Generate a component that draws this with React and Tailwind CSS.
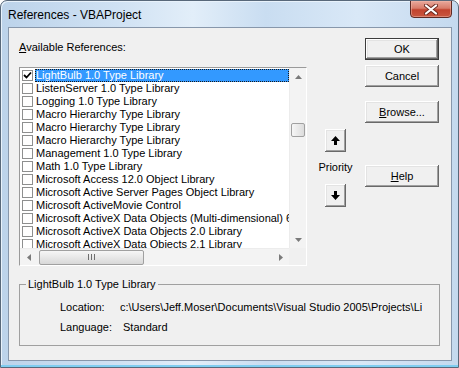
import React from "react";

const FONT = { fontFamily: '"Liberation Sans", Arial, sans-serif' };

const rows = [
  "LightBulb 1.0 Type Library",
  "ListenServer 1.0 Type Library",
  "Logging 1.0 Type Library",
  "Macro Hierarchy Type Library",
  "Macro Hierarchy Type Library",
  "Macro Hierarchy Type Library",
  "Management 1.0 Type Library",
  "Math 1.0 Type Library",
  "Microsoft Access 12.0 Object Library",
  "Microsoft Active Server Pages Object Library",
  "Microsoft ActiveMovie Control",
  "Microsoft ActiveX Data Objects (Multi-dimensional) 6.0 Library",
  "Microsoft ActiveX Data Objects 2.0 Library",
  "Microsoft ActiveX Data Objects 2.1 Library",
];

function Row({ text, index }) {
  const selected = index === 0;
  return (
    <div className="flex h-[13px] shrink-0 items-center">
      <div className="ml-[2px] flex h-[11px] w-[11px] shrink-0 items-center justify-center border border-[#8e8f8f] bg-white">
        {selected && (
          <svg width="9" height="9" viewBox="0 0 9 9">
            <path d="M1 4 L3.5 6.5 L8 1.5" fill="none" stroke="#000" strokeWidth="1.8" />
          </svg>
        )}
      </div>
      <div
        className={
          "ml-[2px] h-[13px] flex-1 overflow-hidden whitespace-nowrap pl-[1px] text-[11px] leading-[13px] " +
          (selected
            ? "bg-[#3399ff] text-white outline-1 outline-dotted outline-[#1a1a1a] -outline-offset-1"
            : "text-black")
        }
      >
        {text}
      </div>
    </div>
  );
}

function Tri({ dir }) {
  const pts = {
    up: "0,4 3.5,0 7,4",
    down: "0,0 3.5,4 7,0",
    left: "4,0 0,3.5 4,7",
    right: "0,0 4,3.5 0,7",
  }[dir];
  const w = dir === "up" || dir === "down" ? 7 : 4;
  const h = dir === "up" || dir === "down" ? 4 : 7;
  return (
    <svg width={w} height={h} viewBox={`0 0 ${w} ${h}`}>
      <polygon points={pts} fill="#7a7a7a" />
    </svg>
  );
}

const btn3d =
  "shadow-[inset_-1px_-1px_0_#696969,inset_1px_1px_0_#ffffff,inset_-2px_-2px_0_#a0a0a0,inset_2px_2px_0_#e3e3e3]";

function Button({ children, isDefault, className = "" }) {
  return (
    <div
      className={
        "flex h-[22px] w-[74px] items-center justify-center bg-[#f0f0f0] text-[11px] leading-[13px] text-black " +
        btn3d +
        (isDefault ? " border border-[#3c3c3c]" : "") +
        " " +
        className
      }
    >
      {children}
    </div>
  );
}

function ArrowBtn({ down }) {
  return (
    <div className={"flex h-[23px] w-[21px] shrink-0 items-center justify-center bg-[#f0f0f0] " + btn3d}>
      <svg width="9" height="9" viewBox="0 0 9 9" style={down ? { transform: "rotate(180deg)" } : undefined}>
        <polygon points="4.5,0 9,5 6,5 6,9 3,9 3,5 0,5" fill="#000" />
      </svg>
    </div>
  );
}

export default function App() {
  return (
    <div
      className="relative h-[368px] w-[459px] overflow-hidden rounded-t-[7px] border border-[#58687a] bg-[linear-gradient(90deg,#bcd3ea_0%,#cfe1f3_25%,#e2eef9_42%,#c9ddf1_58%,#d9e8f7_78%,#c4d9ee_100%)] shadow-[inset_0_-2px_0_#7fcdf0,inset_1px_1px_0_#e8f2fb]"
      style={FONT}
    >
      {/* title bar */}
      <div className="flex h-[26px] items-center pl-[7px] pt-[1px] text-[12px] text-black">
        References - VBAProject
      </div>

      {/* close button */}
      <div className="absolute right-[6px] top-[-1px] flex h-[18px] w-[42px] items-center justify-center rounded-b-[4px] border border-[#5e2a24] bg-[linear-gradient(180deg,#e9a99c_0%,#d87c6a_45%,#c2432e_55%,#c9573f_100%)] shadow-[inset_0_0_0_1px_#f0b8aa80]">
        <svg width="14" height="11" viewBox="0 0 14 11">
          <path d="M2 1.5 L12 9.5 M12 1.5 L2 9.5" stroke="#6b2a20" strokeWidth="4" strokeLinecap="round" />
          <path d="M2 1.5 L12 9.5 M12 1.5 L2 9.5" stroke="#ffffff" strokeWidth="2.2" strokeLinecap="round" />
        </svg>
      </div>

      {/* client area */}
      <div className="ml-[7px] h-[334px] w-[444px] border border-[#8797ab] bg-[#f0f0f0]">
        <div className="flex">
          {/* left column */}
          <div className="ml-[10px] flex flex-col">
            <div className="mt-[13px] h-[13px] text-[11px] leading-[13px] text-black">
              <span className="underline">A</span>vailable References:
            </div>
            <div className="mt-[13px] flex h-[199px] w-[288px] flex-col border border-b-white border-l-[#9a9a9a] border-r-white border-t-[#9a9a9a] bg-white">
              <div className="flex h-[180px]">
                <div className="flex flex-1 flex-col overflow-hidden pt-[1px]">
                  {rows.map((r, i) => (
                    <Row key={i} text={r} index={i} />
                  ))}
                </div>
                {/* vertical scrollbar */}
                <div className="flex w-[17px] flex-col border-l border-[#ececec] bg-[#f3f3f3]">
                  <div className="flex h-[17px] items-center justify-center">
                    <Tri dir="up" />
                  </div>
                  <div className="relative flex-1">
                    <div className="absolute left-[1px] top-[38px] h-[14px] w-[14px] rounded-[2px] border border-[#a0a0a0] bg-[linear-gradient(90deg,#f6f6f6,#dcdcdc)]" />
                  </div>
                  <div className="flex h-[17px] items-center justify-center">
                    <Tri dir="down" />
                  </div>
                </div>
              </div>
              <div className="flex h-[17px]">
                {/* horizontal scrollbar */}
                <div className="flex flex-1 items-center border-t border-[#ececec] bg-[#f3f3f3]">
                  <div className="flex h-[17px] w-[17px] items-center justify-center">
                    <Tri dir="left" />
                  </div>
                  <div className="ml-[2px] flex h-[15px] w-[105px] items-center justify-center gap-[2px] rounded-[2px] border border-[#a0a0a0] bg-[linear-gradient(180deg,#f6f6f6,#d8d8d8)]">
                    <div className="h-[6px] w-[1px] bg-[#6e6e6e]" />
                    <div className="h-[6px] w-[1px] bg-[#6e6e6e]" />
                    <div className="h-[6px] w-[1px] bg-[#6e6e6e]" />
                  </div>
                  <div className="flex-1" />
                  <div className="flex h-[17px] w-[17px] items-center justify-center">
                    <Tri dir="right" />
                  </div>
                </div>
                <div className="h-[17px] w-[17px] bg-[#f0f0f0]" />
              </div>
            </div>
          </div>

          {/* priority column */}
          <div className="ml-[18px] mt-[101px] flex w-[21px] shrink-0 flex-col items-center">
            <ArrowBtn />
            <div className="mt-[9px] h-[13px] whitespace-nowrap text-[11px] leading-[13px] text-black">Priority</div>
            <div className="mt-[10px]">
              <ArrowBtn down />
            </div>
          </div>

          {/* buttons column */}
          <div className="ml-[19px] mt-[10px] flex flex-col">
            <Button isDefault>OK</Button>
            <Button className="mt-[5px]">Cancel</Button>
            <Button className="mt-[14px]">
              <span>
                <span className="underline">B</span>rowse...
              </span>
            </Button>
            <Button className="mt-[42px]">
              <span>
                <span className="underline">H</span>elp
              </span>
            </Button>
          </div>
        </div>

        {/* group box */}
        <div className="relative ml-[10px] mt-[18px] h-[62px] w-[421px] border border-[#a0a0a0]">
          <div className="absolute left-[6px] top-[-7px] bg-[#f0f0f0] px-[2px] text-[11px] leading-[13px] text-black">
            LightBulb 1.0 Type Library
          </div>
          <div className="ml-[40px] mt-[16px] flex h-[13px] text-[11px] leading-[13px] text-black">
            <div className="w-[60px] shrink-0">Location:</div>
            <div className="w-[302px] overflow-hidden whitespace-nowrap">
              c:\Users\Jeff.Moser\Documents\Visual Studio 2005\Projects\Li
            </div>
          </div>
          <div className="ml-[40px] mt-[7px] flex h-[13px] text-[11px] leading-[13px] text-black">
            <div className="w-[63px] shrink-0">Language:</div>
            <div>Standard</div>
          </div>
        </div>
      </div>
    </div>
  );
}
